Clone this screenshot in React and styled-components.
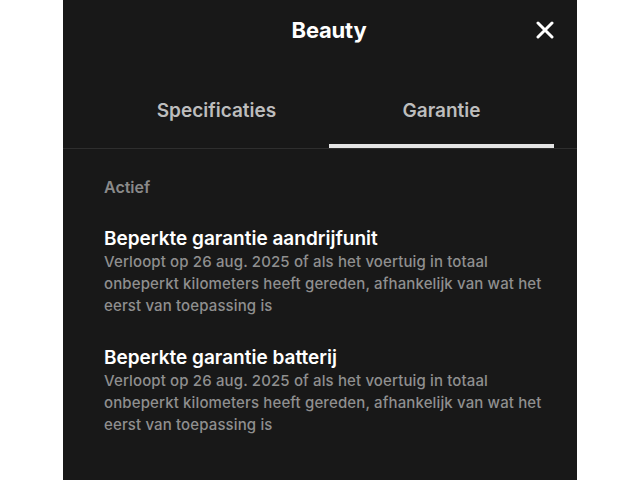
import React from "react";
import styled, { createGlobalStyle } from "styled-components";

const Global = createGlobalStyle`
  html, body { margin: 0; padding: 0; background: #ffffff; }
  body { font-family: Inter, "Noto Sans", sans-serif; -webkit-font-smoothing: antialiased; }
  * { box-sizing: border-box; }
`;

const Panel = styled.div`
  margin-left: 63px;
  width: 514px;
  height: 480px;
  background: #181818;
  overflow: hidden;
`;

const Header = styled.div`
  display: grid;
  grid-template-columns: 1fr auto 1fr;
  align-items: center;
  height: 60px;
  padding: 0 23px 0 41px;
`;

const Title = styled.h1`
  grid-column: 2;
  margin: 0;
  font-size: 22px;
  font-weight: 700;
  color: #ffffff;
  letter-spacing: -0.2px;
`;

const Close = styled.button`
  grid-column: 3;
  justify-self: end;
  width: 18px;
  height: 18px;
  padding: 0;
  border: 0;
  background: none;
  display: flex;
  cursor: pointer;
`;

const TabBar = styled.div`
  display: flex;
  padding: 0 23px 0 41px;
  border-bottom: 1px solid #2e2e2e;
`;

const Tab = styled.div`
  flex: 1;
  text-align: center;
  padding: 40px 0 22px;
  font-size: 19px;
  line-height: 22px;
  font-weight: 600;
  color: #bdbdbd;
  border-bottom: 4px solid ${(p) => (p.$active ? "#e4e4e4" : "transparent")};
`;

const Content = styled.div`
  padding: 28px 23px 0 41px;
  display: flex;
  flex-direction: column;
`;

const Label = styled.div`
  font-size: 16px;
  line-height: 20px;
  font-weight: 600;
  color: #8a8a8a;
  margin-bottom: 30px;
`;

const Item = styled.div`
  margin-bottom: 29px;
`;

const ItemTitle = styled.div`
  font-size: 19px;
  line-height: 24px;
  font-weight: 600;
  color: #ffffff;
`;

const ItemText = styled.div`
  font-size: 15px;
  line-height: 22px;
  font-weight: 500;
  letter-spacing: 0.13px;
  color: #8f8f8f;
`;

const items = [
  "Beperkte garantie aandrijfunit",
  "Beperkte garantie batterij",
];

export default function App() {
  return (
    <>
      <Global />
      <Panel>
        <Header>
          <Title>Beauty</Title>
          <Close aria-label="Sluiten">
            <svg width="18" height="18" viewBox="0 0 18 18">
              <path d="M2 2 L16 16 M16 2 L2 16" stroke="#ffffff" strokeWidth="3" strokeLinecap="round" />
            </svg>
          </Close>
        </Header>
        <TabBar>
          <Tab>Specificaties</Tab>
          <Tab $active>Garantie</Tab>
        </TabBar>
        <Content>
          <Label>Actief</Label>
          {items.map((t) => (
            <Item key={t}>
              <ItemTitle>{t}</ItemTitle>
              <ItemText>
                Verloopt op 26 aug. 2025 of als het voertuig in totaal onbeperkt kilometers heeft gereden, afhankelijk van wat het eerst van toepassing is
              </ItemText>
            </Item>
          ))}
        </Content>
      </Panel>
    </>
  );
}
